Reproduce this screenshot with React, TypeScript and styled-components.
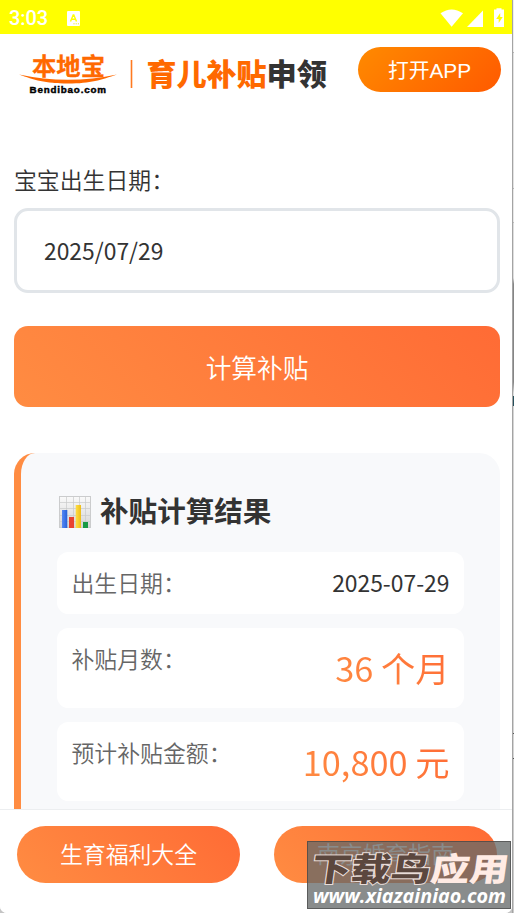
import React from "react";
import styled, { createGlobalStyle } from "styled-components";

const CJK = `"Noto Sans CJK SC", sans-serif`;
const WARM = "linear-gradient(45deg, #ff8c42, #ff6b35)";

const GlobalStyle = createGlobalStyle`
  * { box-sizing: border-box; }
  body { margin: 0; background: #c4c4c4; overflow: hidden; font-family: ${CJK}; font-weight: 400; }
`;

const Shell = styled.div`
  display: grid;
  grid-template-columns: 512px 2px;
  width: 514px;
  height: 913px;
  overflow: hidden;
  position: relative;
`;

const Screen = styled.div`
  display: flex;
  flex-direction: column;
  height: 913px;
  background: #fff;
  overflow: hidden;
  border-radius: 0 0 7px 7px;
`;

const Edge = styled.div`
  border-left: 1px solid #a4a4a4;
  background: linear-gradient(#eee 0 52px, #b5b5b5 52px 53px, #e2e2e2 53px 188px, #b5b5b5 188px 189px,
    #e7e7e7 189px 222px, #bbb 222px 223px, #dedede 223px 278px, #858585 284px 382px, #ddd 393px 396px,
    #26505c 396px 406px, #d5d5d5 406px 733px, #555 733px 734px, #d5d5d5 734px 758px, #555 758px 759px, #ccc 759px);
`;

const StatusBar = styled.div`
  display: flex;
  align-items: center;
  flex: 0 0 34px;
  padding: 2px 8px 0 9px;
  background: #ff0;
  color: #fff;
`;

const Clock = styled.span`
  width: 58px;
  font: 500 20px/24px Roboto, sans-serif;
  letter-spacing: -0.1px;
`;

const StatusIcons = styled.div`
  display: flex;
  margin-left: auto;
`;

const Header = styled.header`
  display: flex;
  align-items: flex-start;
  flex: 0 0 124px;
  padding: 13px 11px 0 18px;
`;

const Brand = styled.svg`
  display: block;
  margin-top: -3px;
`;

const OpenApp = styled.button`
  margin-left: auto;
  width: 143px;
  height: 45px;
  padding: 3px 0 0;
  border: 0;
  border-radius: 23px;
  background: linear-gradient(135deg, #ff8a00, #ff5a00);
  color: #fff;
  font: 400 20.8px/42px "Liberation Sans", ${CJK};
`;

const Form = styled.section`
  display: flex;
  flex-direction: column;
  padding: 4px 12px 0 14px;
`;

const Label = styled.label`
  height: 36px;
  font-size: 22.86px;
  font-weight: 350;
  line-height: 34px;
  color: #333;
`;

const DateField = styled.div`
  height: 85px;
  margin: 10px 0 33px;
  padding-left: 27px;
  border: 3px solid #e1e5e9;
  border-radius: 14px;
  color: #333;
  font-size: 22.86px;
  line-height: 78px;
`;

const Calculate = styled.button`
  height: 81px;
  border: 0;
  border-radius: 14px;
  background: ${WARM};
  color: #fff;
  font: 350 25.7px/81px ${CJK};
  padding: 0;
`;

const Results = styled.section`
  display: flex;
  flex-direction: column;
  gap: 14px;
  flex: 1 1 0;
  min-height: 0;
  overflow: hidden;
  margin: 46px 12px 0 14px;
  padding: 36px 36px 0 36px;
  border-left: 7px solid #ff8c42;
  border-radius: 21px 21px 0 0;
  background: #f8f9fb;
`;

const ResultTitle = styled.h2`
  display: flex;
  align-items: flex-start;
  gap: 9px;
  flex: 0 0 43px;
  margin: 0 0 6px;
  color: #333;
  font-size: 28.57px;
  font-weight: 700;
  line-height: 42px;
  svg { margin-top: 6px; }
`;

const Row = styled.div<{ $tall?: boolean }>`
  display: flex;
  justify-content: space-between;
  align-items: flex-start;
  flex: 0 0 ${(p) => (p.$tall ? 79.7 : 62)}px;
  padding: 13px 14.5px;
  border-radius: 11.5px;
  background: #fff;
  font-size: 22.86px;
  line-height: 34px;
`;

const Name = styled.span`
  color: #666;
  font-weight: 350;
`;

const Value = styled.span`
  color: #333;
`;

const BigValue = styled.span`
  margin-top: 1px;
  font-size: 34.3px;
  line-height: 51.4px;
  background: ${WARM};
  background-clip: text;
  -webkit-background-clip: text;
  color: transparent;
`;

const BottomBar = styled.nav`
  display: flex;
  justify-content: space-between;
  flex: 0 0 104px;
  padding: 16px 15px 0 17px;
  border-top: 1px solid #eceef0;
  background: #fff;
`;

const Pill = styled.button`
  width: 223px;
  height: 57px;
  padding: 0 0 2px;
  border: 0;
  border-radius: 29px;
  background: ${WARM};
  color: #fff;
  font: 350 22.86px/55px ${CJK};
`;

const Watermark = styled.div`
  position: absolute;
  left: 307px;
  top: 841px;
  width: 204px;
  height: 68px;
  border: 1px solid rgba(60, 60, 60, 0.6);
  background: rgba(100, 104, 104, 0.76);
  svg { display: block; }
`;

function BarChart() {
  return (
    <svg width="34" height="34" viewBox="0 0 34 34">
      <defs>
        <linearGradient id="paper" x2="0" y2="1"><stop stopColor="#fafafa" /><stop offset="1" stopColor="#d5d5d5" /></linearGradient>
        <linearGradient id="blue"><stop stopColor="#5688f5" /><stop offset="1" stopColor="#2662d9" /></linearGradient>
        <linearGradient id="yellow"><stop stopColor="#ffdf45" /><stop offset="1" stopColor="#edbd19" /></linearGradient>
      </defs>
      <rect x="2.5" y="1.5" width="31" height="31" fill="url(#paper)" stroke="#cbcccd" />
      <path d="M9.5 2v30M16.5 2v30M22.5 2v30M28.5 2v30M3 7.5h30M3 13.5h30M3 20.5h30M3 26.5h30" stroke="#c9caca" strokeWidth=".7" />
      <path d="M5 15h5.3v18H5z" fill="url(#blue)" />
      <path d="M12 22h5v11h-5z" fill="#e94330" />
      <path d="M18.7 10H24v23h-5.3z" fill="url(#yellow)" />
      <path d="M26 27h5v6h-5z" fill="#199a45" />
    </svg>
  );
}

function BrandMark() {
  return (
    <Brand width="312" height="60" viewBox="18 44 312 60">
      <text x="32" y="74.5" fill="#ff6900" stroke="#ff6900" strokeWidth=".3" fontFamily={CJK} fontWeight="700" fontSize="23.5" textLength="73" lengthAdjust="spacingAndGlyphs">本地宝</text>
      <path d="M19 74.5Q68 85 117 74.5C101 80 91 83.5 68 83.5S34 80 19 74.5Z" fill="#ff6900" />
      <text x="29.5" y="93.3" fill="#000" stroke="#000" strokeWidth=".45" fontFamily="Liberation Sans, sans-serif" fontWeight="700" fontSize="9.8" textLength="76.5" lengthAdjust="spacing">Bendibao.com</text>
      <path d="M131.5 60v28" stroke="#ff7a20" strokeWidth="1.6" />
      <g fontFamily={CJK} fontWeight="900" fontSize="29.5">
        <text x="146.5" y="85" fill="#ff6900" textLength="120" lengthAdjust="spacingAndGlyphs">育儿补贴</text>
        <text x="266.5" y="85" fill="#333" textLength="60.5" lengthAdjust="spacingAndGlyphs">申领</text>
      </g>
    </Brand>
  );
}

export default function App() {
  return (
    <>
      <GlobalStyle />
      <Shell>
        <Screen>
          <StatusBar>
            <Clock>3:03</Clock>
            <svg width="13" height="15" viewBox="0 0 13 15">
              <rect width="13" height="15" rx="1" fill="#fff" />
              <path d="M3.5 10.5 6.2 4h.6l2.7 6.5M4.6 8.2h3.8" fill="none" stroke="#ff0" strokeWidth="1.4" />
              <path d="M6.5 12.8h1m1.2 0h1m1.2 0h1" stroke="#e9e900" />
            </svg>
            <StatusIcons>
              <svg width="64" height="20" viewBox="440 7 64 20" fill="#fff">
                <path d="M440.5 12.3Q451.5 4.5 463 12.3L451.6 25.8Z" />
                <path d="M483 9.5V26h-16Z" />
                <path d="M496.5 8.5V7.3h5v1.2h2.5V26h-10V8.5Z" />
                <path d="m500.2 12-4 6h2.5v4l4-6h-2.5Z" fill="#ff0" />
              </svg>
            </StatusIcons>
          </StatusBar>
          <Header>
            <BrandMark />
            <OpenApp>打开APP</OpenApp>
          </Header>
          <Form>
            <Label>宝宝出生日期：</Label>
            <DateField>2025/07/29</DateField>
            <Calculate>计算补贴</Calculate>
          </Form>
          <Results>
            <ResultTitle><BarChart />补贴计算结果</ResultTitle>
            <Row><Name>出生日期：</Name><Value>2025-07-29</Value></Row>
            <Row $tall><Name>补贴月数：</Name><BigValue>36 个月</BigValue></Row>
            <Row $tall><Name>预计补贴金额：</Name><BigValue>10,800 元</BigValue></Row>
          </Results>
          <BottomBar>
            <Pill>生育福利大全</Pill>
            <Pill>南京婚育指南</Pill>
          </BottomBar>
        </Screen>
        <Edge />
        <Watermark>
          <svg width="202" height="66" viewBox="308 842 202 66">
            <g fontFamily={CJK} fontWeight="900" fontSize="32.5" transform="translate(123 0) skewX(-8)" paintOrder="stroke">
              <text x="311" y="881" fill="#5b473e" stroke="#e9ddd8" strokeWidth="2" textLength="119" lengthAdjust="spacingAndGlyphs">下载鸟</text>
              <text x="430" y="881" fill="#ffebe4" textLength="78" lengthAdjust="spacingAndGlyphs">应用</text>
            </g>
            <text x="313" y="903" fill="#fff" fontFamily="Open Sans, sans-serif" fontStyle="italic" fontWeight="700" fontSize="20" textLength="193" lengthAdjust="spacingAndGlyphs">www.xiazainiao.com</text>
          </svg>
        </Watermark>
      </Shell>
    </>
  );
}
